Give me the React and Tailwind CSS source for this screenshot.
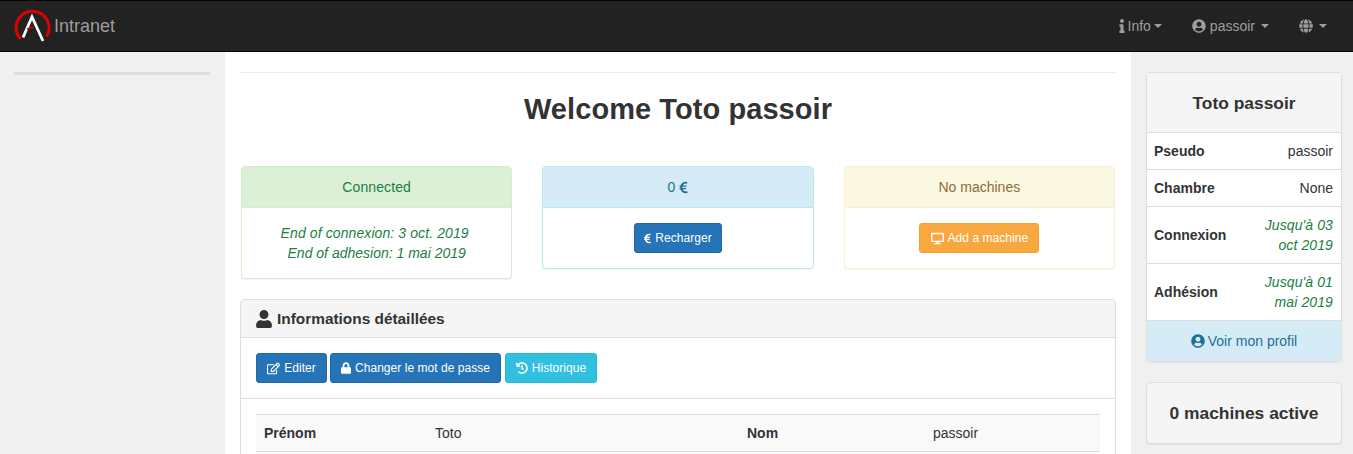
import React from 'react';
import { FaInfo, FaUserCircle, FaGlobe, FaRegEdit, FaLock, FaHistory, FaEuroSign, FaDesktop, FaUser } from 'react-icons/fa';

const Caret = ({ className }) => (
    <span className={`block w-0 h-0 border-x-4 border-t-4 border-x-transparent border-t-[#9d9d9d] ${className || ''}`} />
);

const Logo = () => (
    <svg width="40" height="36" viewBox="12 8 40 36" className="shrink-0">
        <path d="M20.5 39 A16.5 16.5 0 1 1 46.5 36.5" fill="none" stroke="#e00000" strokeWidth="3" />
        <path d="M23 37.5 L32 17 L43 41" fill="none" stroke="#ffffff" strokeWidth="2.8" />
        <path d="M27 29 L33.5 27" fill="none" stroke="#e00000" strokeWidth="1.6" />
    </svg>
);

const Navbar = () => (
    <nav className="h-[52px] shrink-0 bg-[#222222] border-t border-t-black border-b border-b-[#080808] flex items-center justify-between text-[#9d9d9d]">
        <div className="flex items-center pl-[12px]">
            <Logo />
            <span className="text-[18px] ml-[2px]">Intranet</span>
        </div>
        <div className="flex items-center pr-[26px]">
            <a className="flex items-center">
                <FaInfo className="w-[6px] h-[14px]" />
                <span className="ml-[3px]">Info</span>
                <Caret className="ml-[3px]" />
            </a>
            <a className="flex items-center ml-[30px]">
                <FaUserCircle className="w-[14px] h-[14px]" />
                <span className="ml-[4px] mr-[6px]">passoir</span>
                <Caret />
            </a>
            <a className="flex items-center ml-[30px]">
                <FaGlobe className="w-[14px] h-[14px]" />
                <span className="ml-[6px]"><Caret /></span>
            </a>
        </div>
    </nav>
);

const StatusPanel = ({ border, bg, text, title, children }) => (
    <div className={`bg-white border rounded-[4px] shadow-[0_1px_1px_rgba(0,0,0,0.05)] self-start ${border}`}>
        <div className={`h-[41px] flex items-center justify-center gap-[4px] border-b rounded-t-[3px] ${bg} ${text} ${border}`}>
            {title}
        </div>
        {children}
    </div>
);

const Btn = ({ color, icon, width, children }) => (
    <button className={`h-[30px] flex items-center justify-center gap-[4px] rounded-[3px] border text-white text-[12px] tracking-[0.04px] ${color} ${width}`}>
        {icon}
        {children}
    </button>
);

const SideRow = ({ label, value, green, tall }) => (
    <div className={`flex items-center justify-between border-t border-[#dddddd] pl-[7px] pr-[8px] ${tall ? 'h-[57px]' : 'h-[37px]'}`}>
        <span className="font-bold whitespace-nowrap">{label}</span>
        <span className={green ? 'italic text-[#1a7f3f] text-right w-[80px] tracking-[0.1px]' : ''}>{value}</span>
    </div>
);

export default function App() {
    return (
        <div className="h-screen overflow-hidden flex flex-col bg-white text-[14px] leading-[20px] text-[#333333] font-['Liberation_Sans',Arial,sans-serif]">
            <Navbar />
            <div className="flex flex-1 min-h-0">
                {/* Left sidebar */}
                <aside className="w-[225px] shrink-0 bg-[#f0f0f0] pl-[14px] pr-[15px] pt-[20px]">
                    <div className="h-[3px] bg-[#dddddd]" />
                </aside>

                {/* Main */}
                <main className="flex-1 min-w-0 px-[15px] pt-[20px]">
                    <div className="border-t border-[#eeeeee]" />
                    <h1 className="text-[29px] leading-[33px] font-bold text-center mt-[20px] mb-[40px] tracking-[0.07px]">Welcome Toto passoir</h1>

                    <div className="grid grid-cols-3 gap-[30px] mx-[1px]">
                        <StatusPanel border="border-[#d4eecb]" bg="bg-[#dcf0d8]" text="text-[#1a7f3f] tracking-[0.1px]" title="Connected">
                            <div className="py-[15px] text-center italic text-[#1a7f3f]">
                                <div className="pr-[4px] tracking-[0.1px]">End of connexion: 3 oct. 2019</div>
                                <div>End of adhesion: 1 mai 2019</div>
                            </div>
                        </StatusPanel>
                        <StatusPanel
                            border="border-[#b8e8f4]"
                            bg="bg-[#d5ecf7]"
                            text="text-[#1f6f97]"
                            title={<>0 <FaEuroSign className="w-[9px] h-[13px]" /></>}
                        >
                            <div className="py-[15px] flex justify-center">
                                <Btn width="w-[88px]" color="bg-[#2574b8] border-[#2268a6]" icon={<FaEuroSign className="w-[7px] h-[11px]" />}>Recharger</Btn>
                            </div>
                        </StatusPanel>
                        <StatusPanel border="border-[#faeed2]" bg="bg-[#faf8e1]" text="text-[#8a6d3b]" title="No machines">
                            <div className="py-[15px] flex justify-center">
                                <Btn width="w-[120px]" color="bg-[#f9a83f] border-[#f6a02e]" icon={<FaDesktop className="w-[13px] h-[13px]" />}>Add a machine</Btn>
                            </div>
                        </StatusPanel>
                    </div>

                    {/* Detail panel */}
                    <div className="mt-[20px] border border-[#dddddd] rounded-[4px] bg-white">
                        <div className="h-[38px] pt-[1px] bg-[#f5f5f5] border-b border-[#dddddd] flex items-center gap-[5px] px-[15px] rounded-t-[3px] text-[15.4px] font-bold">
                            <FaUser className="w-[16px] h-[18px]" />
                            Informations détaillées
                        </div>
                        <div className="p-[15px] flex gap-[3px] border-b border-[#dddddd]">
                            <Btn width="w-[71px]" color="bg-[#2574b8] border-[#2268a6]" icon={<FaRegEdit className="w-[13px] h-[13px]" />}>Editer</Btn>
                            <Btn width="w-[171px]" color="bg-[#2574b8] border-[#2268a6]" icon={<FaLock className="w-[10px] h-[12px]" />}>Changer le mot de passe</Btn>
                            <Btn width="w-[92px] ml-[1px]" color="bg-[#31c0df] border-[#25b5d6]" icon={<FaHistory className="w-[12px] h-[12px]" />}>Historique</Btn>
                        </div>
                        <div className="px-[15px] pt-[15px]">
                            <div className="grid grid-cols-[171px_312px_186px_1fr] h-[38px] items-center bg-[#f9f9f9] border-y border-[#dddddd]">
                                <span className="pl-[8px] font-bold">Prénom</span>
                                <span className="pl-[8px]">Toto</span>
                                <span className="pl-[8px] font-bold">Nom</span>
                                <span className="pl-[8px]">passoir</span>
                            </div>
                            <div className="h-[37px]" />
                        </div>
                    </div>
                </main>

                {/* Right sidebar */}
                <aside className="w-[222px] shrink-0 bg-[#f0f0f0] pl-[15px] pr-[11px] pt-[20px]">
                    <div className="border border-[#dddddd] rounded-[4px] bg-white shadow-[0_1px_1px_rgba(0,0,0,0.05)]">
                        <div className="h-[59px] bg-[#f5f5f5] flex items-center justify-center text-[17.4px] font-bold rounded-t-[3px]">
                            Toto passoir
                        </div>
                        <SideRow label="Pseudo" value="passoir" />
                        <SideRow label="Chambre" value="None" />
                        <SideRow label="Connexion" value="Jusqu'à 03 oct 2019" green tall />
                        <SideRow label="Adhésion" value="Jusqu'à 01 mai 2019" green tall />
                        <div className="h-[41px] bg-[#d5ecf7] border-t border-[#dddddd] flex items-center justify-center gap-[3px] text-[#1f6f97] rounded-b-[3px]">
                            <FaUserCircle className="w-[14px] h-[14px]" />
                            Voir mon profil
                        </div>
                    </div>
                    <div className="mt-[20px] h-[62px] border border-[#dddddd] rounded-[4px] bg-[#f5f5f5] flex items-center justify-center text-[17.4px] font-bold shadow-[0_1px_1px_rgba(0,0,0,0.05)]">
                        0 machines active
                    </div>
                </aside>
            </div>
        </div>
    );
}
